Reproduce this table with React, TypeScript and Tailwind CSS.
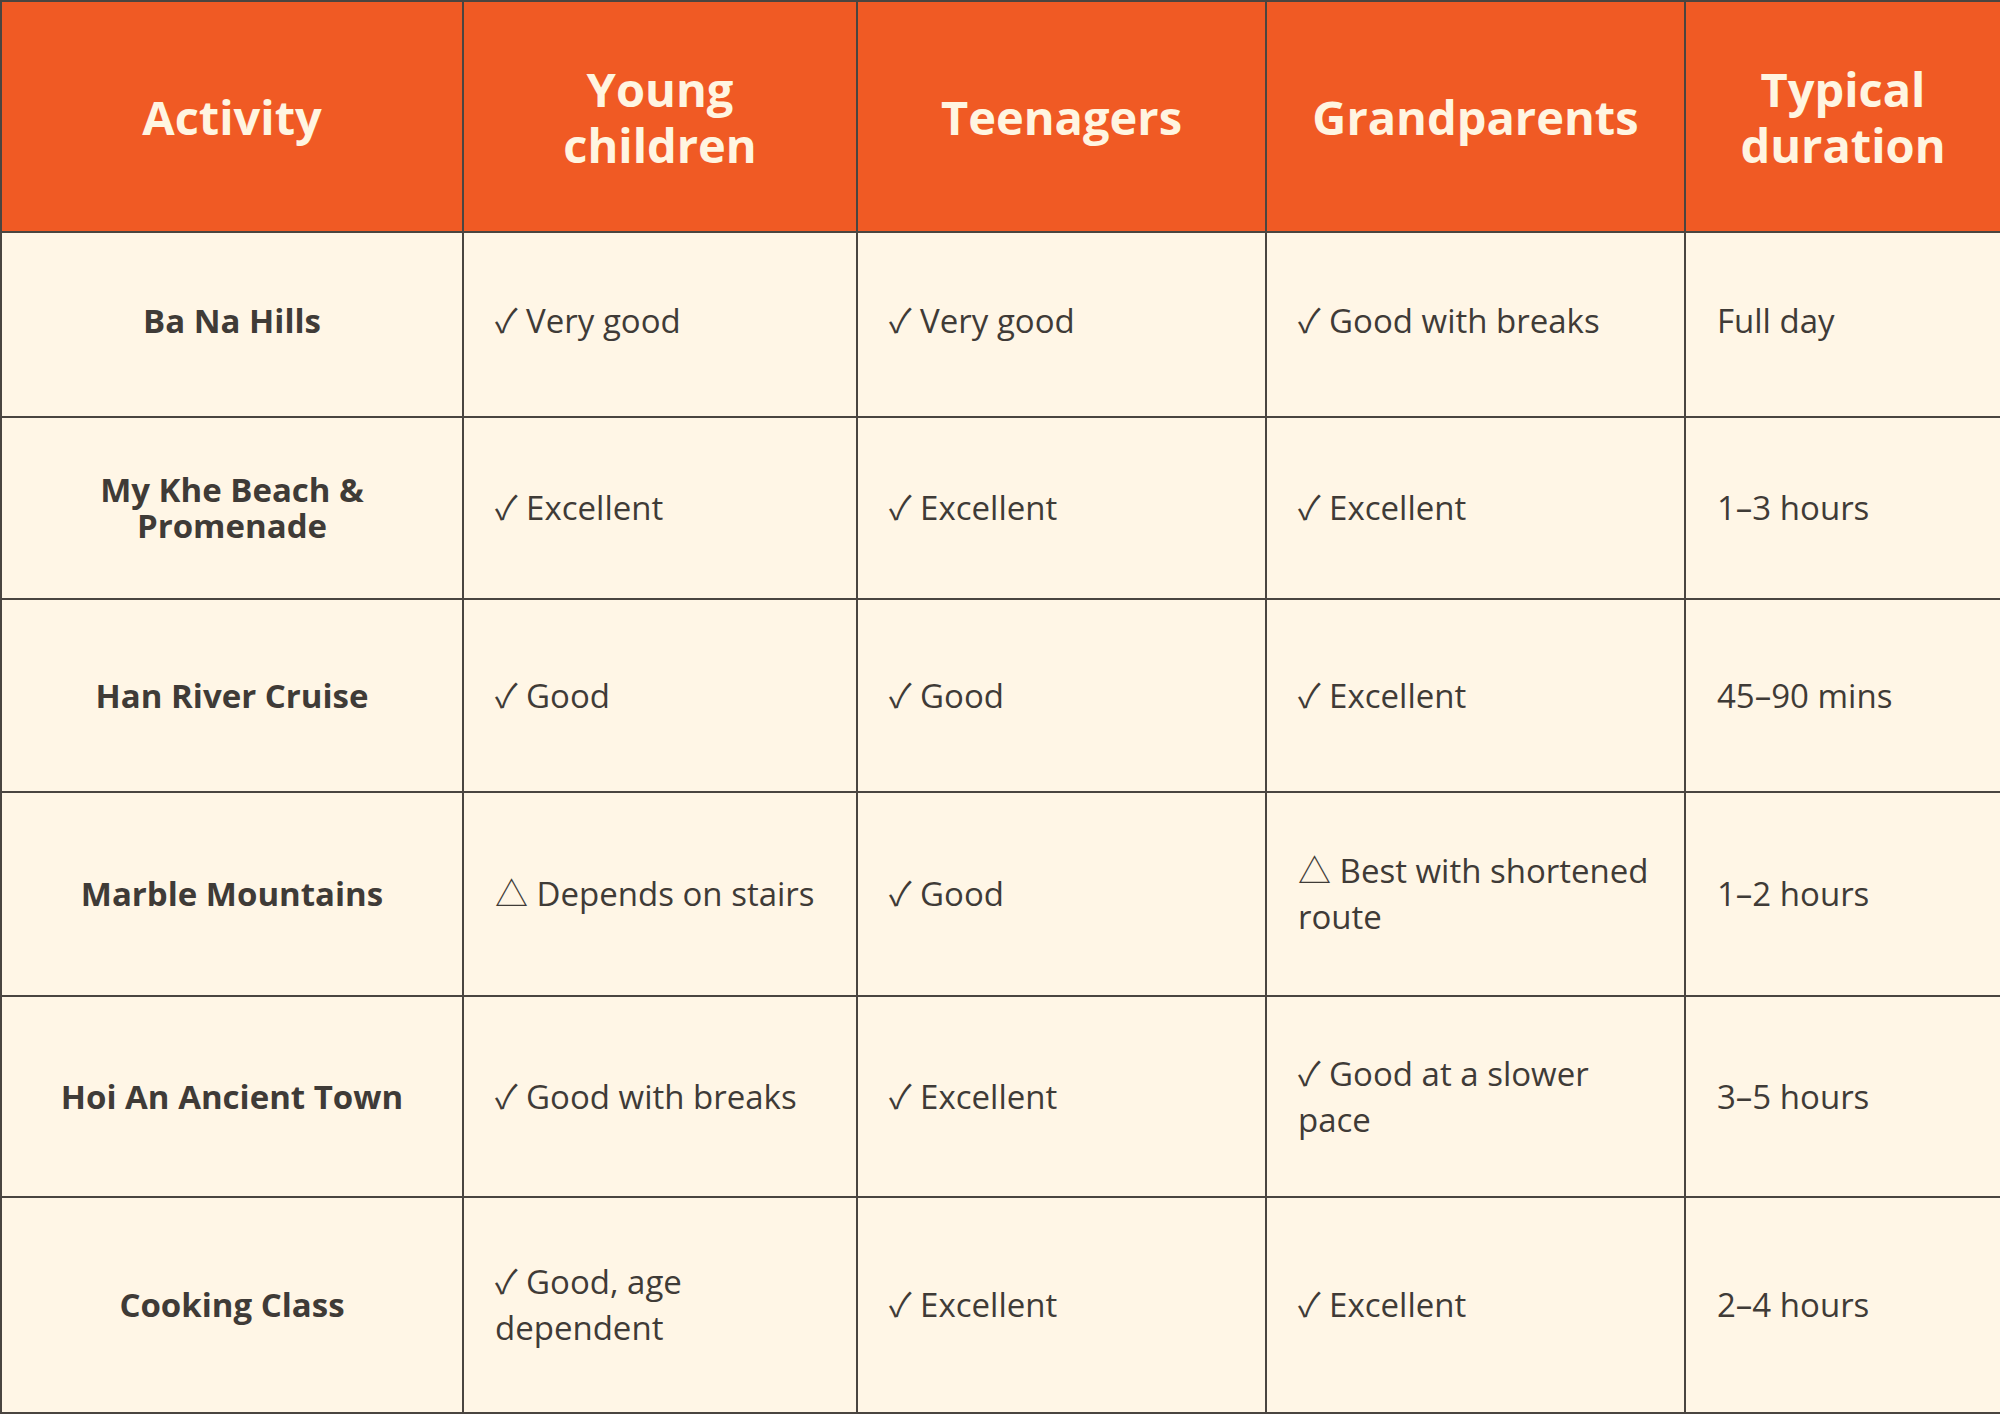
import React from "react";

const rows: { name: string; cells: string[]; h: string; pb: string }[] = [
  { name: "Ba Na Hills", cells: ["✓ Very good", "✓ Very good", "✓ Good with breaks", "Full day"], h: "h-[185px]", pb: "pb-[8px]" },
  { name: "My Khe Beach & Promenade", cells: ["✓ Excellent", "✓ Excellent", "✓ Excellent", "1–3 hours"], h: "h-[182px]", pb: "pb-0" },
  { name: "Han River Cruise", cells: ["✓ Good", "✓ Good", "✓ Excellent", "45–90 mins"], h: "h-[193px]", pb: "pb-0" },
  { name: "Marble Mountains", cells: ["△ Depends on stairs", "✓ Good", "△ Best with shortened route", "1–2 hours"], h: "h-[204px]", pb: "pb-0" },
  { name: "Hoi An Ancient Town", cells: ["✓ Good with breaks", "✓ Excellent", "✓ Good at a slower pace", "3–5 hours"], h: "h-[201px]", pb: "pb-0" },
  { name: "Cooking Class", cells: ["✓ Good, age dependent", "✓ Excellent", "✓ Excellent", "2–4 hours"], h: "h-[216px]", pb: "pb-0" },
];

const headers = ["Activity", "Young children", "Teenagers", "Grandparents", "Typical duration"];

export default function App() {
  return (
    <div className="w-[2000px] h-[1414px] bg-[#FFF6E6] font-['Open_Sans','Noto_Sans_CJK_JP',sans-serif]">
      <table className="w-[2000px] table-fixed border-collapse border-2 border-[#4a4540]">
        <colgroup>
          <col className="w-[462px]" />
          <col className="w-[394px]" />
          <col className="w-[409px]" />
          <col className="w-[419px]" />
          <col className="w-[316px]" />
        </colgroup>
        <thead>
          <tr className="h-[231px] bg-[#F05A24]">
            {headers.map((h) => (
              <th
                key={h}
                className="border-2 border-[#4a4540] px-6 text-center align-middle text-[47px] leading-[56px] font-bold text-[#FFF5E1]"
              >
                {h}
              </th>
            ))}
          </tr>
        </thead>
        <tbody>
          {rows.map((r) => (
            <tr key={r.name} className={`${r.h} bg-[#FFF6E6]`}>
              <td className={`border-2 border-[#4a4540] px-6 ${r.pb} text-center align-middle text-[33px] leading-[36px] font-bold text-[#3f3b37]`}>
                {r.name}
              </td>
              {r.cells.map((c, i) => (
                <td
                  key={i}
                  className={`border-2 border-[#4a4540] pl-[31px] pr-4 ${r.pb} text-left align-middle text-[33px] leading-[46px] font-normal text-[#3f3b37]`}
                >
                  {c}
                </td>
              ))}
            </tr>
          ))}
        </tbody>
      </table>
    </div>
  );
}
